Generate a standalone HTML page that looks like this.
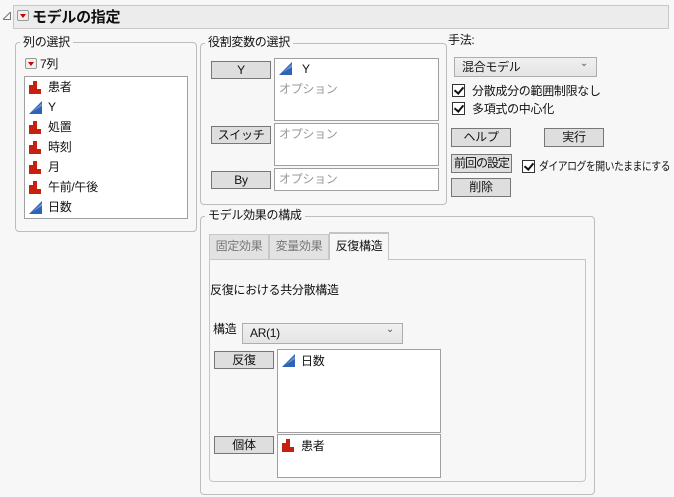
<!DOCTYPE html>
<html><head><meta charset="utf-8"><style>
*{box-sizing:border-box;margin:0;padding:0}
body{width:674px;height:497px;background:#f7f7f7;font-family:"Liberation Sans","Noto Sans CJK JP",sans-serif;font-size:12px;color:#111;position:relative;overflow:hidden;letter-spacing:-0.3px}
.a{position:absolute}
.grp{position:absolute;border:1px solid #bdbdbd;border-radius:4px}
.lbl{position:absolute;background:#f7f7f7;padding:0 3px;font-size:12px;line-height:14px}
.box{position:absolute;background:#fff;border:1px solid #a0a0a0}
.btn{position:absolute;background:#dedede;border:1px solid #777;text-align:center;font-size:12px;line-height:16px;height:18px;white-space:nowrap;overflow:hidden}
.t{position:absolute;line-height:14px;white-space:nowrap}
.gray{color:#999}
.dd{position:absolute;background:linear-gradient(#f0f0f0,#e4e4e4);border:1px solid #adadad;line-height:18px;padding-left:7px}
.dd:after{content:"⌄";position:absolute;right:8px;top:-3px;font-size:10px;color:#555}
.cb{position:absolute;width:13px;height:13px;border:1px solid #333;background:#fff}
.cb:after{content:"";position:absolute;left:3px;top:0px;width:4px;height:7px;border:solid #111;border-width:0 2px 2px 0;transform:rotate(40deg)}
.rb{position:absolute;width:12px;height:11px;background:#f0f0f0;border:1px solid #999;border-radius:2px}
.rb:after{content:"";position:absolute;left:2px;top:3px;border-left:3px solid transparent;border-right:3px solid transparent;border-top:4px solid #c00}
</style></head><body>
<svg width="0" height="0" style="position:absolute"><defs>
<g id="bar"><rect x="0" y="4" width="4" height="9" fill="#c8200e"/><rect x="4" y="0" width="4" height="13" fill="#c8200e"/><rect x="8" y="8" width="4" height="5" fill="#c8200e"/></g>
<g id="tri"><polygon points="0,13 13,0 13,13" fill="#2f63b5"/><polygon points="3,11 13,2 13,5" fill="#6a95d6"/></g>
</defs></svg>

<svg class="a" style="left:3px;top:12px" width="8" height="8"><polygon points="0,7.5 7.5,0 7.5,7.5" fill="none" stroke="#777"/></svg>
<div class="a" style="left:13px;top:5px;width:656px;height:24px;background:#ececec;border:1px solid #c8c8c8"></div>
<div class="rb" style="left:17px;top:10px"></div>
<div class="t" style="left:32px;top:9px;font-size:15px;font-weight:bold;line-height:17px">モデルの指定</div>

<div class="grp" style="left:15px;top:42px;width:182px;height:190px"></div>
<div class="lbl" style="left:20px;top:35px">列の選択</div>
<div class="rb" style="left:25px;top:58px"></div>
<div class="t" style="left:40px;top:57px">7列</div>
<div class="box" style="left:24px;top:76px;width:164px;height:143px"></div>
<svg class="a" style="left:29px;top:81px" width="13" height="133">
<use href="#bar" y="0"/><use href="#tri" y="20"/><use href="#bar" y="40"/><use href="#bar" y="60"/><use href="#bar" y="80"/><use href="#bar" y="100"/><use href="#tri" y="120"/></svg>
<div class="t" style="left:48px;top:80px">患者</div>
<div class="t" style="left:48px;top:100px">Y</div>
<div class="t" style="left:48px;top:120px">処置</div>
<div class="t" style="left:48px;top:140px">時刻</div>
<div class="t" style="left:48px;top:160px">月</div>
<div class="t" style="left:48px;top:180px">午前/午後</div>
<div class="t" style="left:48px;top:200px">日数</div>

<div class="grp" style="left:200px;top:43px;width:247px;height:162px"></div>
<div class="lbl" style="left:205px;top:35px">役割変数の選択</div>
<div class="btn" style="left:211px;top:61px;width:60px">Y</div>
<div class="box" style="left:274px;top:58px;width:165px;height:63px"></div>
<svg class="a" style="left:279px;top:62px" width="13" height="13"><use href="#tri"/></svg>
<div class="t" style="left:302px;top:62px">Y</div>
<div class="t gray" style="left:279px;top:82px">オプション</div>
<div class="btn" style="left:211px;top:126px;width:60px">スイッチ</div>
<div class="box" style="left:274px;top:123px;width:165px;height:43px"></div>
<div class="t gray" style="left:279px;top:127px">オプション</div>
<div class="btn" style="left:211px;top:171px;width:60px">By</div>
<div class="box" style="left:274px;top:168px;width:165px;height:23px"></div>
<div class="t gray" style="left:279px;top:172px">オプション</div>

<div class="t" style="left:448px;top:33px">手法:</div>
<div class="dd" style="left:454px;top:57px;width:143px;height:20px">混合モデル</div>
<div class="cb" style="left:452px;top:84px"></div>
<div class="t" style="left:472px;top:84px">分散成分の範囲制限なし</div>
<div class="cb" style="left:452px;top:102px"></div>
<div class="t" style="left:472px;top:102px">多項式の中心化</div>
<div class="btn" style="left:451px;top:128px;width:60px;height:19px">ヘルプ</div>
<div class="btn" style="left:544px;top:128px;width:60px;height:19px">実行</div>
<div class="btn" style="left:451px;top:154px;width:61px;height:19px;letter-spacing:-1px">前回の設定</div>
<div class="cb" style="left:522px;top:160px"></div>
<div class="t" style="left:539px;top:160px;font-size:11.5px;letter-spacing:-0.6px;transform:scaleX(0.86);transform-origin:0 0">ダイアログを開いたままにする</div>
<div class="btn" style="left:451px;top:178px;width:60px;height:19px">削除</div>

<div class="grp" style="left:200px;top:216px;width:395px;height:279px"></div>
<div class="lbl" style="left:205px;top:208px">モデル効果の構成</div>
<div class="a" style="left:209px;top:259px;width:377px;height:223px;border:1px solid #c4c4c4;border-radius:0 0 4px 4px;background:#f7f7f7"></div>
<div class="a" style="left:209px;top:234px;width:60px;height:26px;background:#e2e2e2;border:1px solid #c8c8c8;color:#777;text-align:center;line-height:22px">固定効果</div>
<div class="a" style="left:269px;top:234px;width:60px;height:26px;background:#e2e2e2;border:1px solid #c8c8c8;color:#777;text-align:center;line-height:22px">変量効果</div>
<div class="a" style="left:329px;top:232px;width:60px;height:28px;background:#f7f7f7;border:1px solid #c4c4c4;border-top:2px solid #c4c4c4;border-bottom:none;text-align:center;line-height:24px">反復構造</div>
<div class="t" style="left:210px;top:283px">反復における共分散構造</div>
<div class="t" style="left:213px;top:322px">構造</div>
<div class="dd" style="left:242px;top:323px;width:161px;height:21px">AR(1)</div>
<div class="btn" style="left:214px;top:351px;width:60px">反復</div>
<div class="box" style="left:277px;top:349px;width:164px;height:84px"></div>
<svg class="a" style="left:282px;top:354px" width="13" height="13"><use href="#tri"/></svg>
<div class="t" style="left:301px;top:354px">日数</div>
<div class="btn" style="left:214px;top:436px;width:60px">個体</div>
<div class="box" style="left:277px;top:434px;width:164px;height:44px"></div>
<svg class="a" style="left:282px;top:439px" width="13" height="13"><use href="#bar"/></svg>
<div class="t" style="left:301px;top:439px">患者</div>
</body></html>
